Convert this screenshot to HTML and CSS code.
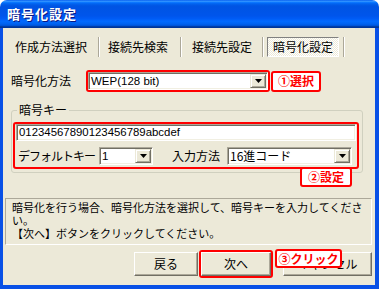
FILE: index.html
```html
<!DOCTYPE html>
<html lang="ja">
<head>
<meta charset="utf-8">
<title>暗号化設定</title>
<link rel="stylesheet" href="styles.css">
</head>
<body>
<div class="window">
  <div class="titlebar"><span class="title">暗号化設定</span></div>
  <div class="frame">
    <div class="tabs">
      <div class="tab">作成方法選択</div>
      <div class="sep s1"></div>
      <div class="tab">接続先検索</div>
      <div class="sep s2"></div>
      <div class="tab">接続先設定</div>
      <div class="sep s3"></div>
      <div class="tab active">暗号化設定</div>
      <div class="sep s4"></div>
    </div>
    <div class="method-row">
      <span class="label method-label">暗号化方法</span>
      <div class="hl hl-method">
        <div class="combo">
          <span class="val latin">WEP(128 bit)</span>
          <span class="drop"><svg width="7" height="4" viewBox="0 0 7 4"><polygon points="0,0 7,0 3.5,4" fill="#000"/></svg></span>
        </div>
      </div>
      <span class="callout c1">①選択</span>
    </div>
    <fieldset class="group">
      <legend>暗号キー</legend>
      <div class="hl hl-key">
        <div class="textbox latin">01234567890123456789abcdef</div>
        <div class="key-row">
          <span class="label key-label">デフォルトキー</span>
          <div class="combo combo-small">
            <span class="val latin">1</span>
            <span class="drop"><svg width="7" height="4" viewBox="0 0 7 4"><polygon points="0,0 7,0 3.5,4" fill="#000"/></svg></span>
          </div>
          <span class="label input-label">入力方法</span>
          <div class="combo combo-mid">
            <span class="val">16進コード</span>
            <span class="drop"><svg width="7" height="4" viewBox="0 0 7 4"><polygon points="0,0 7,0 3.5,4" fill="#000"/></svg></span>
          </div>
        </div>
        <span class="callout c2">②設定</span>
      </div>
    </fieldset>
    <div class="desc">
      <div class="line">暗号化を行う場合、暗号化方法を選択して、暗号キーを入力してくださ</div>
      <div class="line">い。</div>
      <div class="line">【次へ】ボタンをクリックしてください。</div>
    </div>
    <div class="buttons">
      <div class="btn back">戻る</div>
      <div class="hl hl-next"><div class="btn next">次へ</div></div>
      <div class="btn cancel">キャンセル</div>
      <span class="callout c3">③クリック</span>
    </div>
  </div>
</div>
</body>
</html>
```
FILE: styles.css
```css
* { box-sizing: border-box; }
body {
  margin: 0;
  background: #fff;
  font-family: "Noto Sans CJK JP", sans-serif;
  font-size: 12px;
  color: #000;
}
.window {
  width: 379px;
  height: 289px;
  display: flex;
  flex-direction: column;
}
.titlebar {
  height: 28px;
  flex: none;
  border-radius: 7px 7px 0 0;
  background: linear-gradient(to bottom, #0058EE 0%, #3593FF 4%, #288EFF 6%, #127DFF 8%, #036FFC 10%, #0262EE 14%, #0057E5 20%, #0054E3 24%, #0055EB 56%, #005BF5 66%, #026AFE 76%, #0062EF 86%, #0052D6 92%, #0040AB 94%, #003092 100%);
  display: flex;
  align-items: center;
  padding-left: 7px;
}
.title {
  color: #fff;
  font-weight: bold;
  font-size: 13px;
  letter-spacing: 1px;
  line-height: 16px;
  text-shadow: 1px 1px 0 #0A1883;
}
.frame {
  flex: 1;
  background: #ECE9D8;
  border-style: solid;
  border-color: #0850E6;
  border-width: 0 4px 4px 3px;
  display: flex;
  flex-direction: column;
}
.latin { font-family: "Liberation Sans", "Noto Sans CJK JP", sans-serif; font-size: 11px; }

/* tabs */
.tabs {
  display: flex;
  align-items: center;
  height: 20px;
  margin-top: 9px;
  padding-left: 7px;
}
.tab { padding: 0 5px; line-height: 20px; white-space: nowrap; }
.tab.active {
  border: 1px solid;
  border-color: #808080 #fff #fff #808080;
  line-height: 18px;
  background: repeating-conic-gradient(#fff 0 25%, #ECE9D8 0 50%) 0 0 / 2px 2px;
}
.sep { width: 2px; height: 20px; border-left: 1px solid #ACA899; border-right: 1px solid #fff; }
.s1 { margin: 0 3px 0 6px; }
.s2 { margin: 0 5px 0 7px; }
.s3 { margin: 0 3px 0 5px; }
.s4 { margin: 0 0 0 4px; }

/* method row */
.method-row {
  display: flex;
  align-items: center;
  height: 22px;
  margin-top: 13px;
  padding-left: 8px;
}
.label { white-space: nowrap; line-height: 14px; }
.method-label { width: 75px; }
.hl { border: 2px solid #f00; border-radius: 3px; }
.hl-method { width: 184px; height: 22px; }

.combo {
  display: flex;
  height: 18px;
  background: #fff;
  border: 1px solid;
  border-color: #ACA899 #fff #fff #ACA899;
  box-shadow: inset 1px 1px 0 #716F64, inset -1px -1px 0 #F1EFE2;
  padding: 1px;
}
.combo .val { flex: 1; padding-left: 1px; line-height: 14px; white-space: nowrap; }
.combo .val.latin { font-size: 11.5px; }
.drop {
  width: 16px;
  flex: none;
  background: #ECE9D8;
  border: 1px solid;
  border-color: #ECE9D8 #716F64 #716F64 #ECE9D8;
  box-shadow: inset 1px 1px 0 #fff, inset -1px -1px 0 #ACA899;
  display: flex;
  align-items: center;
  justify-content: center;
}
.drop svg { display: block; }

.callout {
  border: 2px solid #f00;
  border-radius: 3px;
  background: #fff;
  color: #f00;
  font-weight: bold;
  font-size: 12px;
  line-height: 14px;
  display: flex;
  align-items: center;
  justify-content: center;
  white-space: nowrap;
}
.c1 { width: 50px; height: 21px; margin-left: 1px; }

/* group */
.group {
  margin: 11px 0 0 8px;
  width: 352px;
  min-width: 0;
  border: 1px solid #D0D0BF;
  border-radius: 3px;
  padding: 5px 3px 3px 1px;
}
.group legend {
  padding: 0 2px;
  margin-left: 4px;
  line-height: 14px;
}
.hl-key { position: relative; padding: 0 0 2px 0; }
.textbox {
  margin: 0 1px;
  height: 17px;
  background: #fff;
  border: 1px solid;
  border-color: #ACA899 #fff #fff #ACA899;
  box-shadow: inset 1px 1px 0 #716F64, inset -1px -1px 0 #F1EFE2;
  padding-left: 2px;
  line-height: 15px;
  font-size: 11.4px;
}
.key-row {
  display: flex;
  align-items: center;
  height: 18px;
  margin-top: 6px;
}
.key-label { width: 81px; margin-left: 3px; letter-spacing: -1px; }
.combo-small { width: 54px; }
.input-label { width: 55px; margin-left: 19px; }
.combo-mid { width: 125px; }
.c2 { position: absolute; right: 5px; bottom: -20px; width: 52px; height: 20px; }

/* description */
.desc {
  margin: 25px 0 0 2px;
  width: 367px;
  height: 47px;
  border: 1px solid;
  border-color: #ACA899 #fff #fff #ACA899;
  padding: 2px 6px;
  font-size: 11px;
}
.desc .line {
  height: 13px;
  line-height: 13px;
  white-space: nowrap;
}

/* buttons */
.buttons {
  position: relative;
  display: flex;
  align-items: center;
  height: 28px;
  margin-top: 5px;
  padding-left: 131px;
}
.btn {
  height: 24px;
  border: 1px solid;
  border-color: #fff #716F64 #716F64 #fff;
  box-shadow: inset -1px -1px 0 #ACA899;
  background: #ECE9D8;
  display: flex;
  align-items: center;
  justify-content: center;
  line-height: 14px;
}
.back { width: 64px; }
.hl-next { margin-left: 1px; width: 74px; height: 28px; }
.next { width: 70px; }
.cancel { width: 89px; margin-left: 10px; }
.c3 { position: absolute; left: 272px; top: -1px; width: 67px; height: 19px; }
```
